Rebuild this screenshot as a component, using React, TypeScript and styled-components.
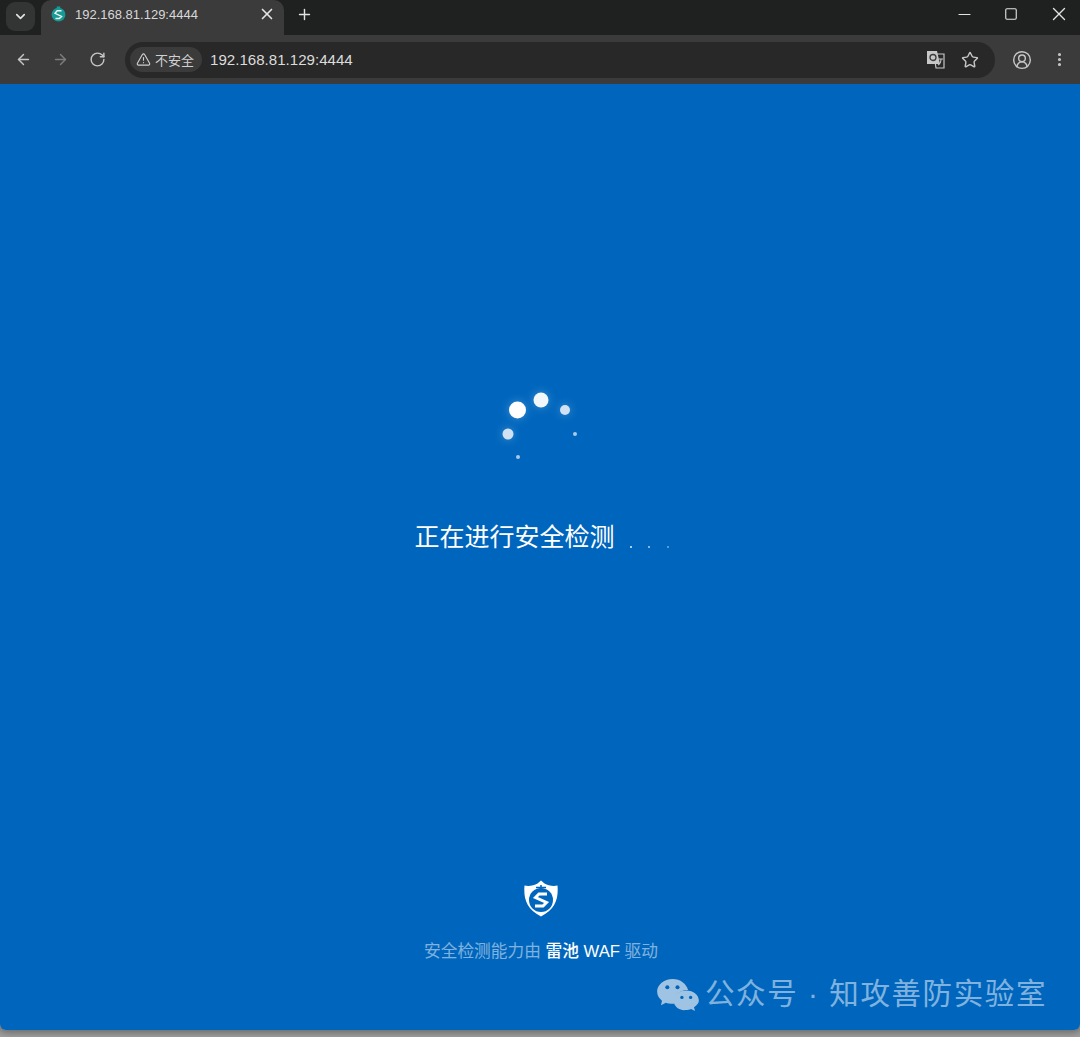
import styled, { createGlobalStyle } from 'styled-components'
import { ArrowLeft, ArrowRight, ChevronDown, EllipsisVertical, Minus, Plus, RotateCw, Square, Star, TriangleAlert, X, CircleUserRound } from 'lucide-react'

const GlobalStyle = createGlobalStyle`
  html, body {
    margin: 0;
    padding: 0;
    height: 100%;
    background: #fff;
  }
  body {
    font-family: "Liberation Sans", "Noto Sans CJK SC", sans-serif;
  }
`

const Screen = styled.div`
  width: 1080px;
  height: 1037px;
  overflow: hidden;
  background: #a0a0a0;
`

const Browser = styled.div`
  width: 1080px;
  height: 1030px;
  display: flex;
  flex-direction: column;
  border-radius: 0 0 6px 6px;
  overflow: hidden;
  box-shadow: 0 0 8px 2px rgba(0, 0, 0, 0.4);
`

const TabStrip = styled.div`
  height: 35px;
  flex: none;
  display: flex;
  align-items: center;
  background: #1f2020;
  color: #e3e3e3;
  padding-left: 6px;
`

const TabSearch = styled.div`
  width: 29px;
  height: 29px;
  margin-top: -3px;
  border-radius: 9px;
  background: #333434;
  display: flex;
  align-items: center;
  justify-content: center;
`

const Tab = styled.div`
  width: 243px;
  height: 35px;
  margin-left: 6px;
  box-sizing: border-box;
  padding: 0 8px 0 10px;
  border-radius: 10px 10px 0 0;
  background: #3b3b3b;
  display: flex;
  align-items: center;
  font-size: 13px;
`

const TabTitle = styled.span`
  margin-left: 9px;
  flex: 1;
  padding-bottom: 7px;
  color: #d8d8d8;
`

const TabIcon = styled.svg`
  width: 15px;
  height: 16px;
  margin-bottom: 7px;
`

const TabClose = styled.div`
  display: flex;
  margin-bottom: 7px;
`

const NewTab = styled.div`
  display: flex;
  margin: 0 0 7px 12px;
`

const WindowButtons = styled.div`
  margin-left: auto;
  margin-bottom: 7px;
  display: flex;
  align-items: center;
  gap: 30px;
  padding-right: 10px;
`

const Toolbar = styled.div`
  height: 49px;
  flex: none;
  display: flex;
  align-items: center;
  box-sizing: border-box;
  background: #3b3b3b;
  padding-left: 15px;
  color: #c7c7c7;
`

const NavGroup = styled.div`
  display: flex;
  align-items: center;
  gap: 20px;
`

const NavIcon = styled.div<{ $dim?: boolean }>`
  display: flex;
  color: ${(p) => (p.$dim ? '#7d7d7d' : '#c7c7c7')};
`

const Omnibox = styled.div`
  width: 870px;
  height: 36px;
  margin-left: 19px;
  box-sizing: border-box;
  border-radius: 18px;
  background: #282828;
  display: flex;
  align-items: center;
  padding: 0 16px 0 5px;
`

const SecurityChip = styled.div`
  height: 25px;
  box-sizing: border-box;
  padding: 0 8px 0 6px;
  border-radius: 13px;
  background: #3b3b3b;
  display: flex;
  align-items: center;
  gap: 4px;
  font-size: 13px;
  color: #d0d0d0;
`

const Url = styled.span`
  margin-left: 8px;
  font-size: 15.1px;
  color: #dcdcdc;
`

const OmniIcons = styled.div`
  margin-left: auto;
  display: flex;
  align-items: center;
  gap: 15px;
`

const ProfileIcons = styled.div`
  margin-left: 17px;
  display: flex;
  align-items: center;
  gap: 19px;
`

const Page = styled.main`
  flex: 1;
  position: relative;
  background: #0066bd;
  display: flex;
  flex-direction: column;
  align-items: center;
  padding-top: 301px;
`

const Spinner = styled.svg`
  width: 100px;
  height: 80px;
  flex: none;
`

const Status = styled.div`
  margin-top: 55px;
  display: flex;
  align-items: flex-end;
  color: #fff;
  font-size: 25px;
  line-height: 34px;
  padding-left: 3px;
`

const StatusDots = styled.div`
  margin-left: 15px;
  margin-bottom: 6px;
  display: flex;
  gap: 16.5px;
`

const StatusDot = styled.i<{ $level: number }>`
  width: 2px;
  height: 2px;
  border-radius: 50%;
  background: #fff;
  opacity: ${(p) => p.$level};
`

const Shield = styled.svg`
  width: 34px;
  height: 37px;
  margin-top: 326px;
  padding-left: 2px;
  flex: none;
`

const PoweredBy = styled.div`
  margin-top: 23px;
  padding-left: 2px;
  font-size: 16.7px;
  line-height: 24px;
  color: rgba(255, 255, 255, 0.5);
`

const Brand = styled.span`
  color: #fff;
  font-weight: 500;
`

const Watermark = styled.div`
  position: absolute;
  right: 33px;
  bottom: 11px;
  display: flex;
  align-items: center;
  gap: 6px;
  font-size: 29.5px;
  letter-spacing: 1.6px;
  line-height: 50px;
  color: rgba(255, 255, 255, 0.52);
`

const ShieldMark = ({ bg, fg }: { bg: string; fg: string }) => (
  <>
    <path
      d="M17 0.5 L20.5 3.5 C24 5.5 29 6.5 33.5 5.5 C34.5 18 32 29 17 36.5 C2 29 -0.5 18 0.5 5.5 C5 6.5 10 5.5 13.500 3.5 Z"
      fill={fg}
    />
    <circle cx="17" cy="20" r="12" fill={bg} />
    <path d="M12 7.5 H22 M17 5 V9" stroke={bg} strokeWidth="1.6" />
    <path
      d="M23 14 L15 14 L11.500 17.500 L22.500 22.500 L19 26 L11 26"
      stroke={fg}
      strokeWidth="3"
      fill="none"
    />
  </>
)

const App = () => (
  <Screen>
    <GlobalStyle />
    <Browser>
      <TabStrip>
        <TabSearch>
          <ChevronDown size={15} strokeWidth={2.6} />
        </TabSearch>
        <Tab>
          <TabIcon viewBox="0 0 34 37">
            <circle cx="17" cy="20" r="16" fill="#159a96" />
            <path d="M13 1 H21 V7 H13 Z" fill="#159a96" />
            <path
              d="M24 11 L14 11 L9 17 L24 24 L19 29 L10 29"
              stroke="#f2f2f2"
              strokeWidth="3.4"
              fill="none"
            />
          </TabIcon>
          <TabTitle>192.168.81.129:4444</TabTitle>
          <TabClose>
            <X size={18} strokeWidth={2.2} />
          </TabClose>
        </Tab>
        <NewTab>
          <Plus size={17} strokeWidth={2} />
        </NewTab>
        <WindowButtons>
          <Minus size={19} strokeWidth={1.4} />
          <Square size={14} strokeWidth={1.9} />
          <X size={22} strokeWidth={1.5} />
        </WindowButtons>
      </TabStrip>
      <Toolbar>
        <NavGroup>
          <NavIcon>
            <ArrowLeft size={17} strokeWidth={2} />
          </NavIcon>
          <NavIcon $dim>
            <ArrowRight size={17} strokeWidth={2} />
          </NavIcon>
          <NavIcon>
            <RotateCw size={17} strokeWidth={2} />
          </NavIcon>
        </NavGroup>
        <Omnibox>
          <SecurityChip>
            <TriangleAlert size={15} strokeWidth={1.8} />
            不安全
          </SecurityChip>
          <Url>192.168.81.129:4444</Url>
          <OmniIcons>
            <svg width="20" height="20" viewBox="0 0 20 20">
              <path d="M8 4 H18 V18 H10 Z" fill="none" stroke="#c7c7c7" strokeWidth="1.2" />
              <path d="M1 1 H11 L14 14 H1 Z" fill="#c7c7c7" />
              <circle cx="7" cy="7.5" r="3" fill="none" stroke="#3b3b3b" strokeWidth="1.3" />
              <path d="M12.5 9 H17 M15 9 C15 12 14 14 12 15" stroke="#c7c7c7" fill="none" strokeWidth="1.1" />
            </svg>
            <Star size={18} strokeWidth={1.9} />
          </OmniIcons>
        </Omnibox>
        <ProfileIcons>
          <CircleUserRound size={20} strokeWidth={1.7} />
          <EllipsisVertical size={17} strokeWidth={2.4} />
        </ProfileIcons>
      </Toolbar>
      <Page>
        <Spinner viewBox="0 0 100 80">
          <defs>
            <filter id="glow" x="-150%" y="-150%" width="400%" height="400%">
              <feGaussianBlur stdDeviation="4" />
            </filter>
          </defs>
          <g filter="url(#glow)" fill="#fff" opacity="0.28">
            <circle cx="27.5" cy="25" r="8.5" />
            <circle cx="51" cy="15" r="7.5" />
            <circle cx="75" cy="25" r="5" />
            <circle cx="18" cy="49" r="5.5" />
          </g>
          <circle cx="27.5" cy="25" r="8.5" fill="#fff" />
          <circle cx="51" cy="15" r="7.5" fill="#f1f6fb" />
          <circle cx="75" cy="25" r="5" fill="#cfe1f2" />
          <circle cx="18" cy="49" r="5.5" fill="#cfe1f2" />
          <circle cx="85" cy="49" r="2" fill="#a9c9e6" />
          <circle cx="28" cy="72" r="2" fill="#a9c9e6" />
        </Spinner>
        <Status>
          正在进行安全检测
          <StatusDots>
            <StatusDot $level={0.9} />
            <StatusDot $level={0.7} />
            <StatusDot $level={0.45} />
          </StatusDots>
        </Status>
        <Shield viewBox="0 0 34 37">
          <ShieldMark bg="#0066bd" fg="#fff" />
        </Shield>
        <PoweredBy>
          安全检测能力由 <Brand>雷池 WAF</Brand> 驱动
        </PoweredBy>
        <Watermark>
          <svg width="42" height="33" viewBox="0 0 43 34">
            <path
              d="M16 1 C7 1 0 7 0 14 C0 18 2 21 5 23.5 L4 28 L9 25.5 C11 26.2 13 26.5 16 26.5 C17 26.5 17.5 26.4 18 26.3 C16 19 23 12 32 12.5 C30 6 24 1 16 1 Z"
              fill="#9fc3e3"
            />
            <path
              d="M30 13 C22.5 13 17 18 17 23.5 C17 29 22.5 34 30 33 C32 33 33 32.8 35 32 L39 34 L38 30.2 C41 28 43 26 43 23.5 C43 18 37.5 13 30 13 Z"
              fill="#9fc3e3"
            />
            <circle cx="10.5" cy="9.5" r="2.1" fill="#0066bd" />
            <circle cx="21" cy="9.5" r="2.1" fill="#0066bd" />
            <circle cx="25.5" cy="20" r="1.7" fill="#0066bd" />
            <circle cx="34.5" cy="20" r="1.7" fill="#0066bd" />
          </svg>
          公众号 · 知攻善防实验室
        </Watermark>
      </Page>
    </Browser>
  </Screen>
)

export default App
